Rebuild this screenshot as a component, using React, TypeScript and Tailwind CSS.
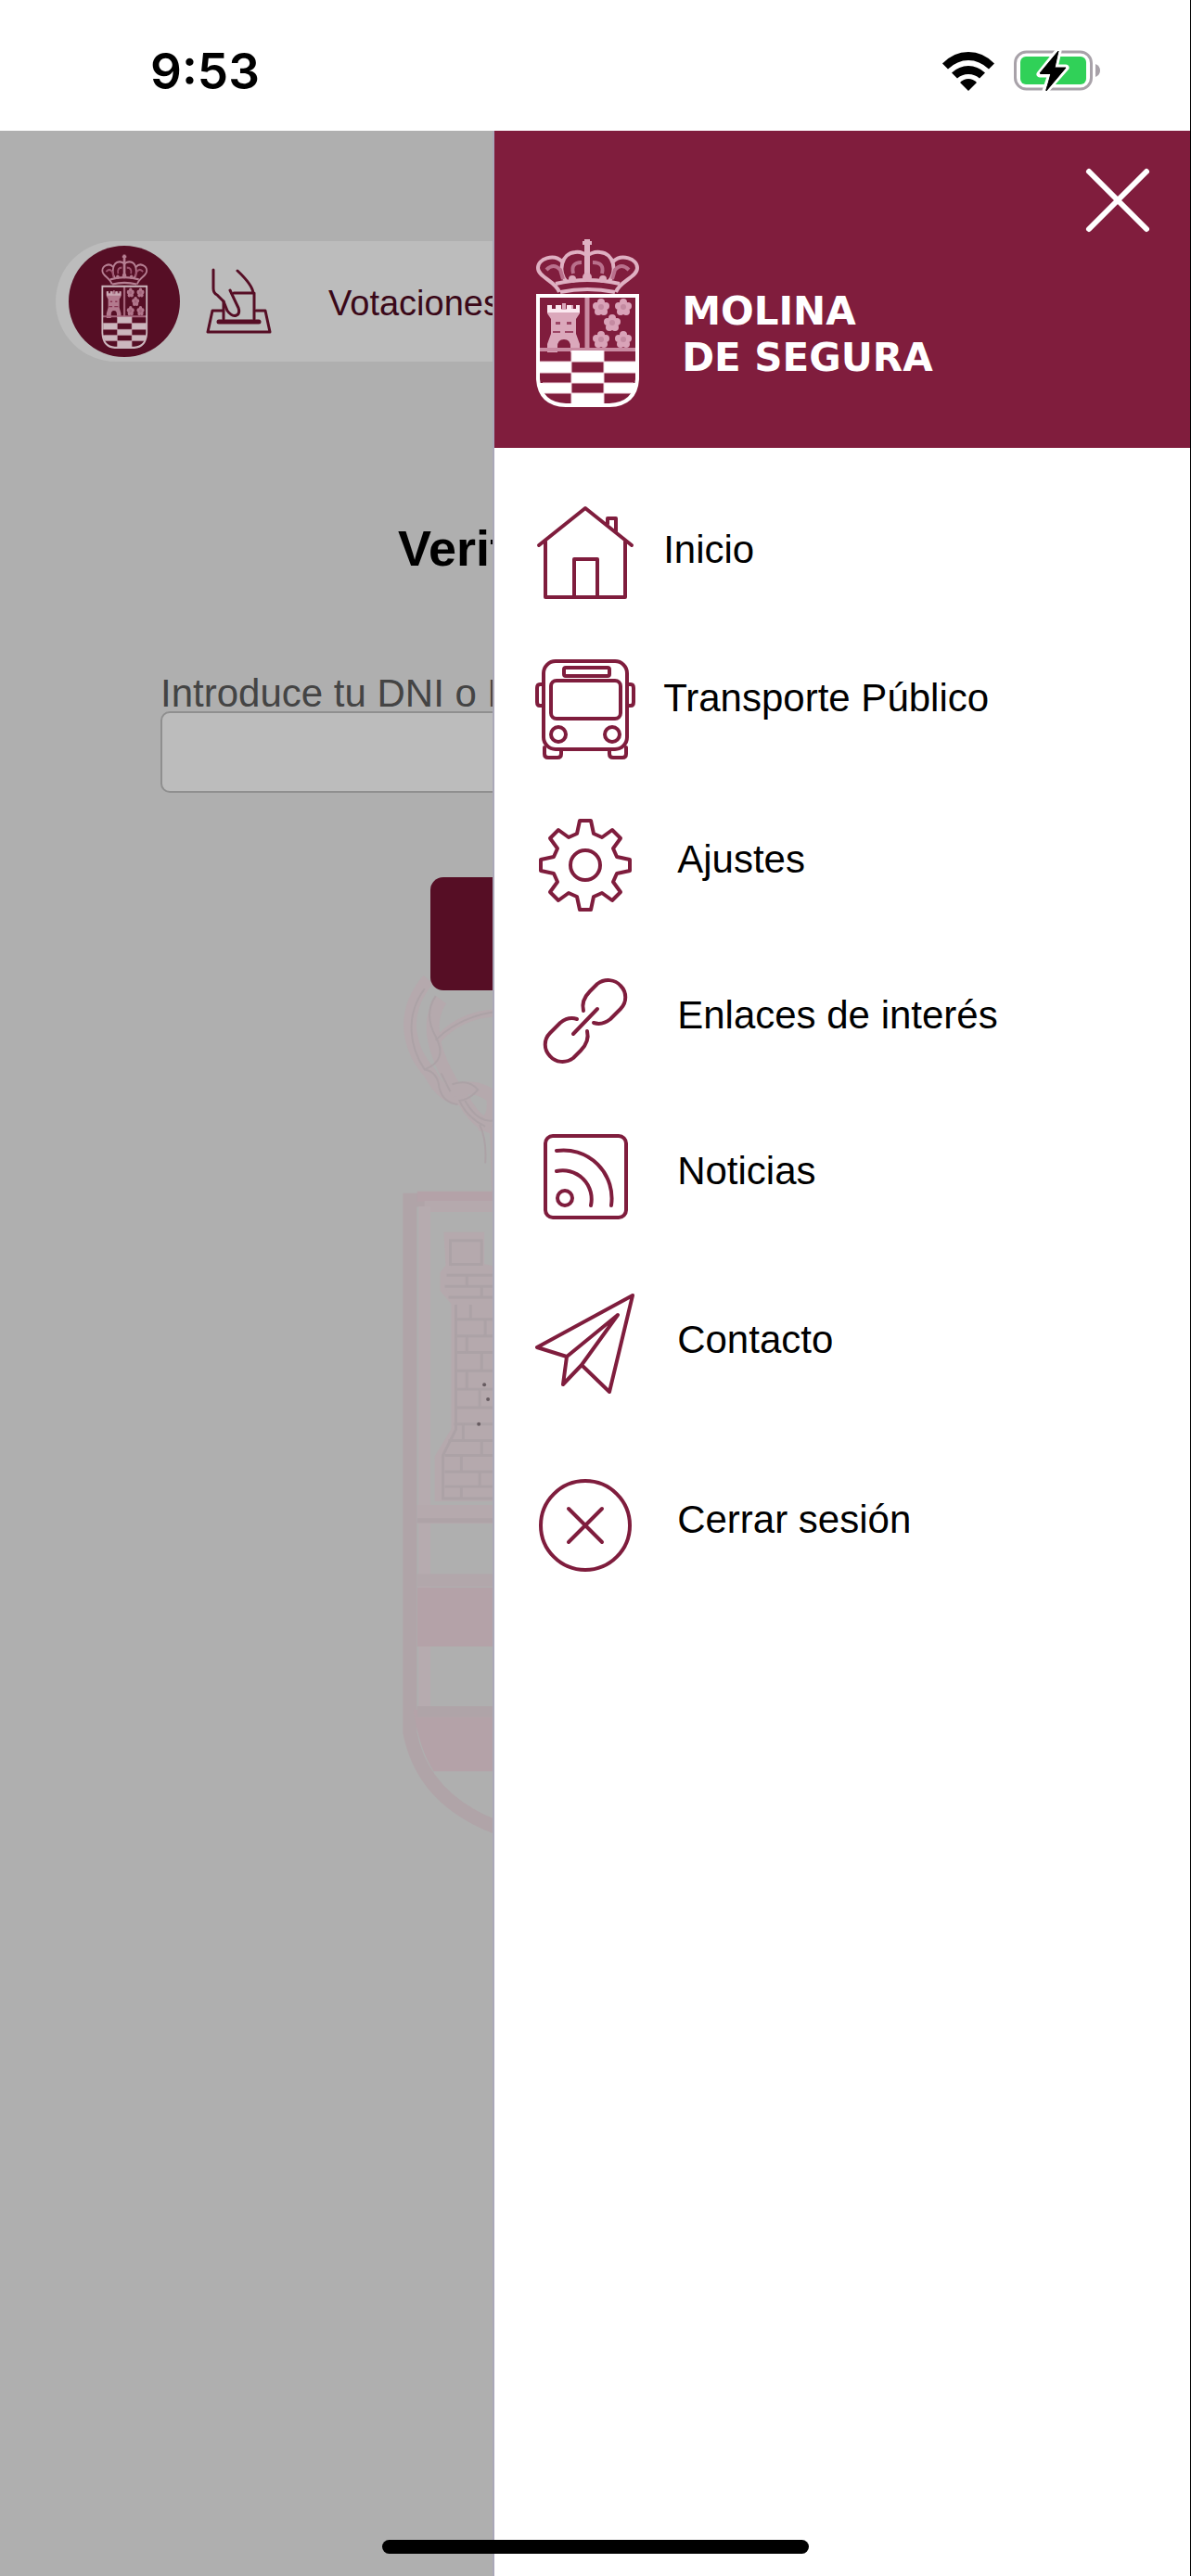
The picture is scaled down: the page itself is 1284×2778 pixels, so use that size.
import type { ReactNode } from 'react';

type MenuItem = {
  label: string;
  icon: ReactNode;
  rowClass: string;
  textClass: string;
};

function LineIcon({ children }: { children: ReactNode }) {
  return (
    <svg
      viewBox="0 0 108 108"
      className="size-[108px] shrink-0"
      fill="none"
      stroke="#7f1d3d"
      strokeWidth="4"
      strokeLinecap="round"
      strokeLinejoin="round"
      aria-hidden="true"
    >
      {children}
    </svg>
  );
}

function Flower({ x, y }: { x: number; y: number }) {
  return (
    <g transform={`translate(${x} ${y})`} fill="#d9a3b8" stroke="none">
      <circle cx="0" cy="-5" r="4" />
      <circle cx="5" cy="-1" r="4" />
      <circle cx="3" cy="5" r="4" />
      <circle cx="-3" cy="5" r="4" />
      <circle cx="-5" cy="-1" r="4" />
      <circle cx="0" cy="0" r="3" fill="#c48aa1" />
    </g>
  );
}

function Crest({ className }: { className: string }) {
  return (
    <svg viewBox="0 0 114 182" preserveAspectRatio="none" className={className} fill="none" aria-hidden="true">
      {/* Crown */}
      <g stroke="#dfb0c2" strokeWidth="4" strokeLinejoin="round">
        <path d="M56 1V44" strokeWidth="6" />
        <path d="M51 5H61" />
        <path d="M26 58C22 46 3 42 3 32C3 22 20 16 29 25" />
        <path d="M87 58C91 46 110 42 110 32C110 22 93 16 84 25" />
        <path d="M34 47C24 36 28 16 43 15C49 14 55 17 56 20" />
        <path d="M79 47C89 36 85 16 70 15C64 14 57 17 56 20" />
        <path d="M22 49Q56 41 91 49M27 58Q56 52 86 58" />
      </g>
      <g stroke="#b9708c" strokeWidth="4">
        <path d="M12 34Q20 26 27 34L30 44M101 34Q93 26 86 34L83 44" />
        <path d="M41 38Q38 26 50 26M72 38Q75 26 62 26" />
      </g>
      <g fill="#dcaabd">
        <circle cx="40" cy="44" r="4" />
        <circle cx="56" cy="42" r="5" />
        <circle cx="73" cy="44" r="4" />
      </g>
      {/* Castle */}
      <g fill="#dba8bb">
        <path d="M13 72h5v4h4v-4h6v4h1v-6h4v6h3v-4h5v4h3v-4h4v9l-4 6v16l4 11v9H38v-6q0-8-7-8t-7 8v6H13v-9l4-11V87l-4-6z" />
        <path d="M22 90h5v3h-5zM34 90h5v3h-5zM19 100h8v2h-8zM32 100h9v2h-9z" fill="#9c4565" />
      </g>
      <path d="M13 72h5v4h4v-4h6v5h6v-5h5v4h5v-4h4v8H13z" fill="#fbe9f0" />
      <path d="M56 63V120" stroke="#c98ba2" strokeWidth="5" />
      <Flower x={71} y={74} />
      <Flower x={95} y={74} />
      <Flower x={83} y={91} />
      <Flower x={71} y={109} />
      <Flower x={95} y={109} />
      <path d="M4 120H110" stroke="#c98ba2" strokeWidth="4" />
      {/* Checkered field */}
      <g fill="#fff">
        <path d="M39 121H74V133H39zM5 133H39V145H5zM74 133H109V145H74zM39 145H74V156H39z" />
        <path d="M3 156H39V167H9zM74 156H110L105 167H74zM39 167H74V180H39z" />
      </g>
      <path d="M5 145H109M5 133H109M8 156H106M10 167H103M39 121V180M74 121V180" stroke="#f3d9e2" strokeWidth="1" />
      <path d="M3 62H110V152Q108 179 80 180H33Q5 179 3 152Z" stroke="#fff" strokeWidth="4" />
    </svg>
  );
}

// Large faint coat of arms behind the form
function Watermark() {
  return (
    <svg
      viewBox="0 0 424 980"
      className="absolute top-[881px] left-1/2 h-[980px] w-[420px] -translate-x-1/2"
      fill="none"
      aria-hidden="true"
    >
      <g stroke="#b5a9ad" strokeWidth="14">
        <path d="M30 30C-4 70 12 110 32 132Q46 160 68 160Q82 188 104 192L106 262" />
        <path d="M44 52C24 80 40 118 60 150Q84 144 100 158Q104 186 84 188" />
        <path d="M40 96Q66 66 112 66" strokeWidth="8" />
      </g>
      <g stroke="#aca2a6" strokeWidth="2">
        <path d="M26 40C4 70 10 104 26 128Q52 118 38 92C28 74 30 60 38 48" />
        <path d="M38 96Q66 68 112 64M44 132L54 152M26 128Q40 130 42 148Q46 164 62 166" />
        <path d="M56 144Q74 138 84 150Q76 160 64 162Q72 180 92 190M70 162Q86 190 106 182M86 188Q94 206 92 230" />
      </g>
      {/* Shield frame */}
      <path d="M10 270H414V850Q392 962 212 974Q32 962 10 850Z" stroke="#b0a4a8" strokeWidth="15" />
      <path d="M18 266H406" stroke="#b4a2a8" strokeWidth="11" />
      <path d="M26 277H398V840" stroke="#b5a9ad" strokeWidth="12" />
      <path d="M26 277V828" stroke="#b6abaf" strokeWidth="13" />
      {/* Tower */}
      <path
        d="M50 308H88V342L104 346V595H40V550L58 520V382L46 368V350L52 342Z"
        fill="#b5a9ad"
        stroke="#b5a9ad"
        strokeWidth="6"
      />
      <g stroke="#aca2a6" strokeWidth="3">
        <path d="M54 314H88V340H54ZM50 352H104M48 364H104M52 376H104M60 384V520L46 548V595H104" />
        <path d="M60 400H104M60 418H104M60 436H104M60 456H104M60 476H104M60 496H104M58 514H104M52 532H104M48 548H104M48 566H104M48 582H104" />
        <path d="M72 352V364M88 364V376M76 384V400M92 400V418M72 418V436M88 436V456M72 456V476M86 476V496M68 514V532M88 532V548M66 548V566M86 566V582M66 582V595" />
      </g>
      <g fill="#675c61">
        <circle cx="91" cy="471" r="2" />
        <circle cx="95" cy="487" r="2" />
        <circle cx="85" cy="514" r="2" />
      </g>
      {/* Stripes */}
      <path d="M18 612H406" stroke="#b5a9ad" strokeWidth="20" />
      <path d="M18 619H406" stroke="#aea3a7" strokeWidth="5" />
      <path d="M18 684H406" stroke="#b2a7ab" strokeWidth="14" />
      <path d="M18 692H406V756H18Z" fill="#b4a2a8" />
      <path d="M14 825H410L400 892H36Q20 868 14 825Z" fill="#b4a2a8" />
      <path d="M18 827H406" stroke="#afa4a8" strokeWidth="12" />
    </svg>
  );
}

function VoteIcon() {
  return (
    <svg
      viewBox="0 0 72 72"
      className="size-[72px] shrink-0"
      fill="none"
      stroke="#560e25"
      strokeWidth="3"
      strokeLinecap="round"
      strokeLinejoin="round"
      aria-hidden="true"
    >
      <path d="M8 2V22Q8 27 12 29L19 36L23 46Q28 53 33 51Q37 49 35 43L26 24" />
      <path d="M34 3Q50 18 51 27M30 27H52V55M19 36V55" />
      <path d="M18 46H7L2 69H69L64 46H54" />
      <path d="M14 58H57" strokeWidth="5" />
    </svg>
  );
}

function StatusBar() {
  return (
    <div className="flex h-[141px] items-start justify-between bg-white pt-[54px] pr-[96px] pl-[162px]">
      <span className="font-['Inter',sans-serif] text-[53px] leading-[46px] font-semibold text-black">9:53</span>
      <div className="flex items-center gap-5">
        <svg viewBox="0 0 58 43" className="h-[43px] w-[58px]" aria-hidden="true">
          <path d="M1 12.500Q13 0 29 0T57 12.500L51 18.500Q41 9 29 9T7 18.500Z" />
          <path d="M11 22.500Q19 15 29 15T47 22.500L41 28.500Q36 24 29 24T17 28.500Z" />
          <path d="M20 33Q24 29 29 29T38 33L29 42Z" />
        </svg>
        <svg viewBox="0 0 94 46" className="h-[46px] w-[94px]" aria-hidden="true">
          <rect x="1.500" y="2" width="82" height="40" rx="12" fill="none" stroke="#a8a2a9" strokeWidth="3" />
          <rect x="7" y="7" width="71" height="30" rx="6" fill="#30d158" />
          <path d="M88 15Q93 17 93 22T88 29Z" fill="#a8a2a9" />
          <path
            d="M48 1L28 26H40L34 44L56 19H44Z"
            fill="#000"
            stroke="#fff"
            strokeWidth="7"
            strokeLinejoin="round"
            paintOrder="stroke"
          />
          <path d="M48 1L28 25H40L35 44L56 19H44Z" fill="#000" stroke="#000" strokeWidth="1" strokeLinejoin="round" />
        </svg>
      </div>
    </div>
  );
}

const items: MenuItem[] = [
  {
    label: 'Inicio',
    rowClass: 'gap-[30px]',
    textClass: 'pb-2',
    icon: (
      <LineIcon>
        <path d="M4 45L54 5L104 45M11 41V101H97V41M42 101V60H67V101M78 22V16H87V30" />
      </LineIcon>
    ),
  },
  {
    label: 'Transporte Público',
    rowClass: 'gap-[30px]',
    textClass: 'pb-6',
    icon: (
      <LineIcon>
        <rect x="9" y="2" width="90" height="95" rx="13" />
        <rect x="31" y="9" width="49" height="9" rx="2" />
        <rect x="17" y="23" width="75" height="41" rx="6" />
        <circle cx="25" cy="81" r="8" />
        <circle cx="83" cy="81" r="8" />
        <path d="M9 27H5Q2 27 2 31V46Q2 50 5 50H9M99 27H103Q106 27 106 31V46Q106 50 103 50H99" />
        <path d="M10 95V102Q10 106 14 106H24Q28 106 28 102V97M80 97V102Q80 106 84 106H94Q98 106 98 102V95" />
      </LineIcon>
    ),
  },
  {
    label: 'Ajustes',
    rowClass: 'gap-[45px]',
    textClass: 'pb-3',
    icon: (
      <LineIcon>
        <path d="M48 6H60L63 20L72 24L83 16L92 25L84 36L88 45L102 48V60L88 63L84 72L92 83L83 92L72 84L63 88L60 102H48L45 88L36 84L25 92L16 83L24 72L20 63L6 60V48L20 45L24 36L16 25L25 16L36 24L45 20Z" />
        <circle cx="54" cy="54" r="16" />
      </LineIcon>
    ),
  },
  {
    label: 'Enlaces de interés',
    rowClass: 'gap-[45px]',
    textClass: 'pb-3',
    icon: (
      <LineIcon>
        <path d="M52 43C50 35 53 28 59 22L67 14C75 8 86 9 92 16C99 23 99 34 92 41L81 52C76 56 69 58 63 56" />
        <path d="M56 65C58 73 55 80 49 86L41 94C33 100 22 99 16 92C9 85 9 74 16 67L27 56C32 52 39 50 45 52" />
        <path d="M41 68L67 41" />
      </LineIcon>
    ),
  },
  {
    label: 'Noticias',
    rowClass: 'gap-[45px]',
    textClass: 'pb-3',
    icon: (
      <LineIcon>
        <rect x="11" y="10" width="87" height="88" rx="8" />
        <path d="M23 26A52 52 0 0 1 82 85M23 48A31 31 0 0 1 60 85" />
        <circle cx="32" cy="77" r="8" />
      </LineIcon>
    ),
  },
  {
    label: 'Contacto',
    rowClass: 'gap-[45px] pt-3',
    textClass: 'pb-2',
    icon: (
      <LineIcon>
        <path d="M105 2L2 58L34 68L30 98L50 77L80 106ZM34 68L89 23L50 77" />
      </LineIcon>
    ),
  },
  {
    label: 'Cerrar sesión',
    rowClass: 'gap-[45px] pt-7',
    textClass: 'pb-3',
    icon: (
      <LineIcon>
        <circle cx="54" cy="54" r="48" />
        <path d="M36 36L72 72M72 36L36 72" />
      </LineIcon>
    ),
  },
];

function Drawer() {
  return (
    <aside className="absolute top-0 right-0 bottom-0 w-[58.6%] border-l-2 border-[#aaa8b8] bg-white">
      <div className="flex h-[342px] flex-col bg-[#801d3d] pt-[38px] pr-[41px] pl-11">
        <button type="button" aria-label="Cerrar menú" className="self-end">
          <svg viewBox="0 0 74 74" className="size-[74px]" fill="none" stroke="#fff" strokeWidth="6" strokeLinecap="round">
            <path d="M6 6L68 68M68 6L6 68" />
          </svg>
        </button>
        <div className="mt-1 flex items-end gap-11">
          <Crest className="h-[182px] w-[114px] shrink-0" />
          <p className="pb-7 font-['DejaVu_Sans',sans-serif] text-[42px] leading-[50px] font-bold whitespace-nowrap text-white">
            MOLINA
            <br />
            DE SEGURA
          </p>
        </div>
      </div>

      <nav className="pt-[60px] pl-11">
        <ul className="flex flex-col gap-[60px]">
          {items.map((item) => (
            <li key={item.label}>
              <a href="#" className={`flex items-center text-[42px] leading-[48px] text-black ${item.rowClass}`}>
                {item.icon}
                <span className={item.textClass}>{item.label}</span>
              </a>
            </li>
          ))}
        </ul>
      </nav>
    </aside>
  );
}

export default function App() {
  return (
    <div className="flex min-h-screen flex-col border-r border-black bg-white font-['Liberation_Sans',Arial,sans-serif]">
      <StatusBar />

      <div className="relative flex-1 overflow-hidden bg-[#afafaf]">
        <Watermark />

        {/* Page behind the drawer */}
        <main className="relative pt-[119px]">
          <div className="mx-[60px] flex h-[130px] items-center rounded-full bg-[#bcbcbc] pl-[14px]">
            <div className="flex size-[120px] items-center justify-center rounded-full bg-[#560e25]">
              <Crest className="h-[102px] w-[51px] opacity-70" />
            </div>
            <div className="ml-7">
              <VoteIcon />
            </div>
            <span className="ml-[60px] pt-1 text-[38px] text-[#3a0818]">Votaciones</span>
          </div>

          <h1 className="mt-[171px] pl-[429px] text-[54px] leading-[60px] font-bold text-black">Verificar</h1>

          <form className="mx-[173px] mt-[108px] flex flex-col items-center">
            <label htmlFor="dni" className="self-start text-[42px] leading-[38px] text-[#444444]">
              Introduce tu DNI o NIE
            </label>
            <input
              id="dni"
              type="text"
              className="h-[88px] w-full rounded-[10px] border-2 border-[#8f8f8f] bg-[#bcbcbc] px-4 text-[42px]"
            />
            <button
              type="button"
              aria-label="Verificar"
              className="mt-[91px] h-[122px] w-[356px] rounded-[14px] bg-[#560e25]"
            />
          </form>
        </main>

        <Drawer />

        {/* Home indicator */}
        <div className="absolute bottom-6 left-1/2 h-[15px] w-[460px] -translate-x-1/2 rounded-full bg-black" />
      </div>
    </div>
  );
}
